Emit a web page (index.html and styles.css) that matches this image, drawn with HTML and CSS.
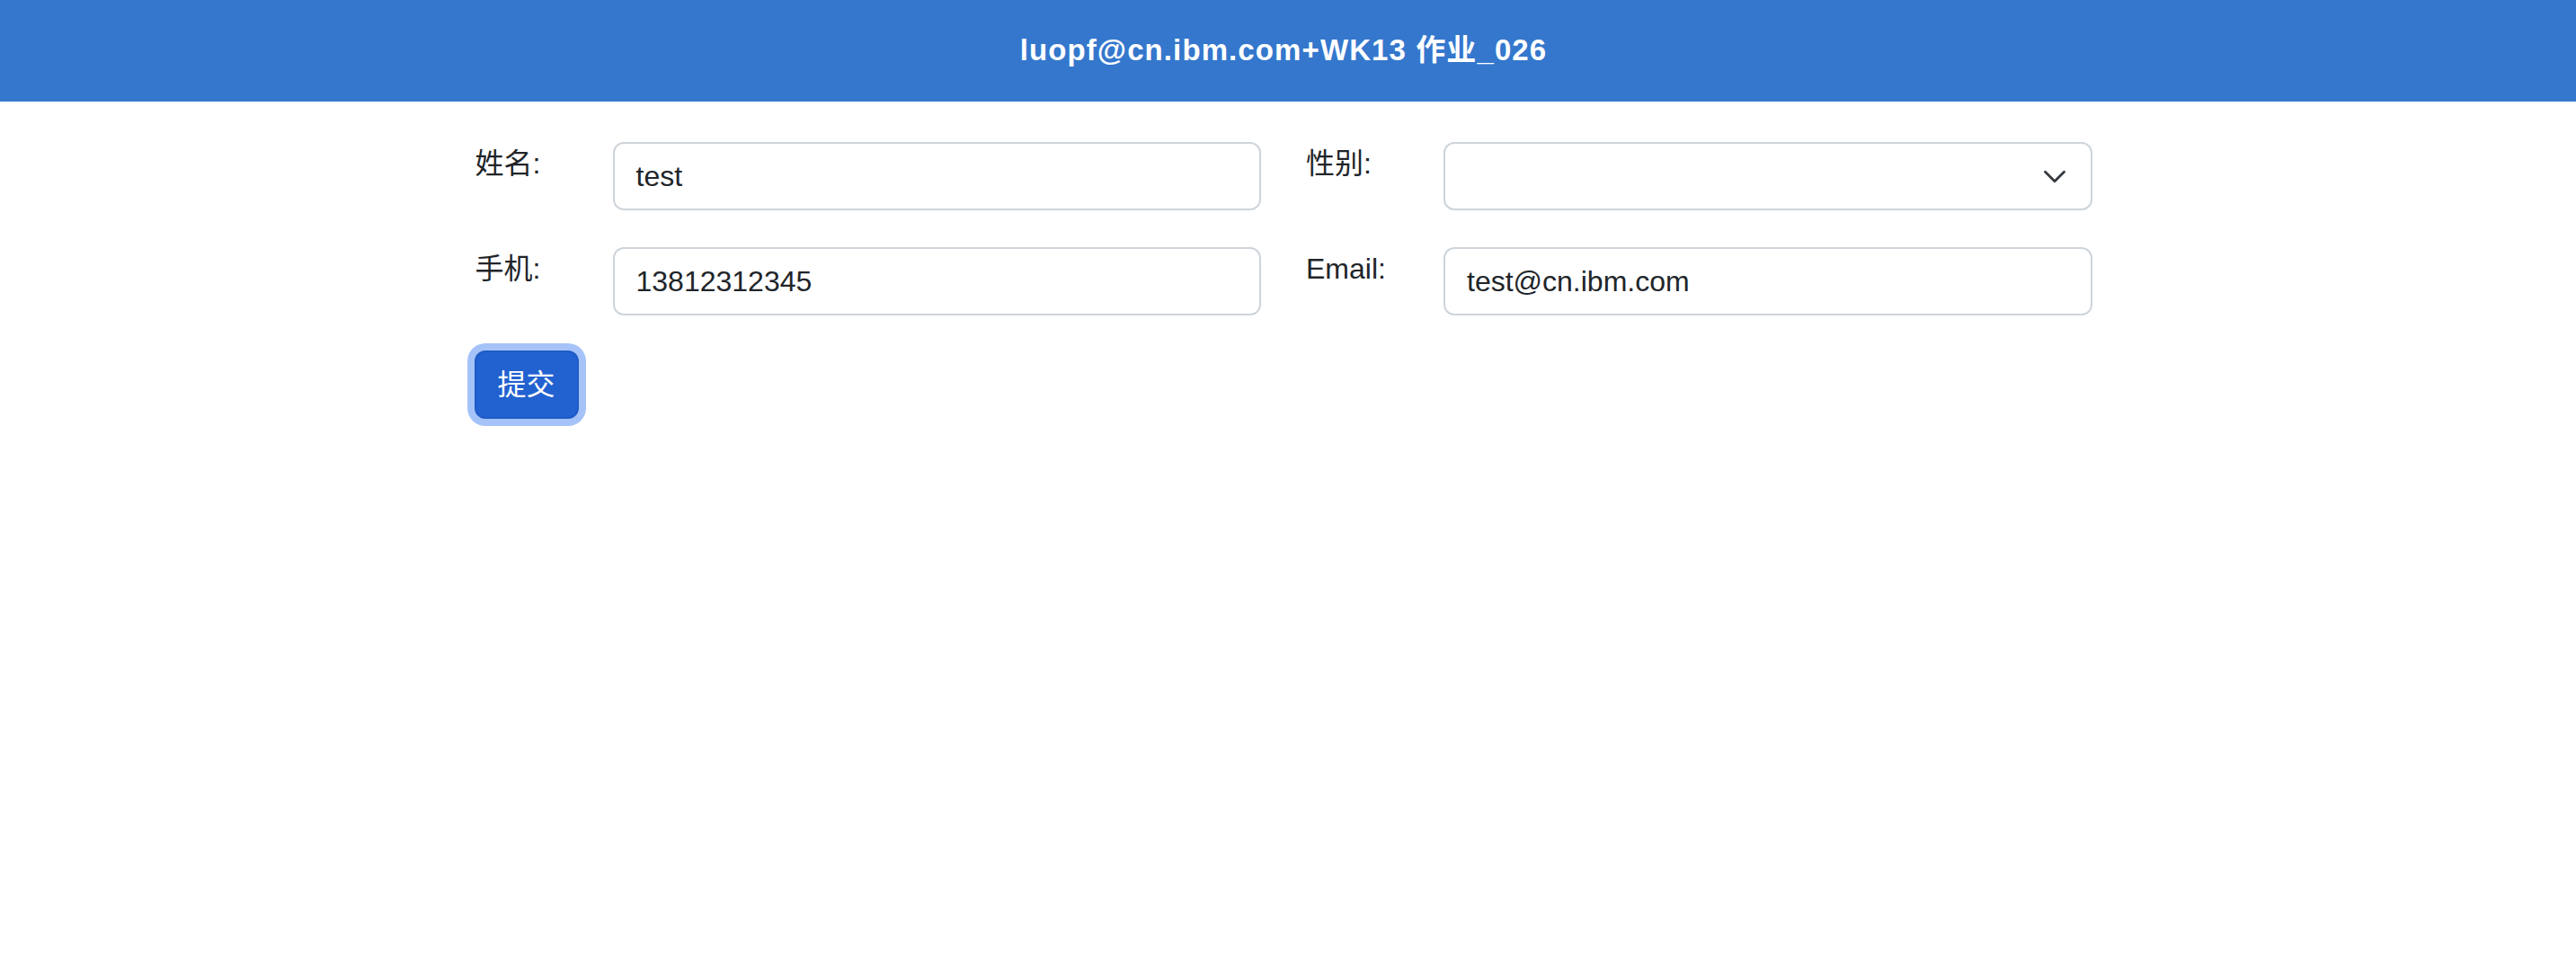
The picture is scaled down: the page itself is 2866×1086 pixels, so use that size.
FILE: index.html
```html
<!DOCTYPE html>
<html lang="zh-CN">
<head>
<meta charset="utf-8">
<title>作业_026</title>
<link rel="stylesheet" href="styles.css">
</head>
<body>
<header class="topbar">
  <h1 class="title">luopf@cn.ibm.com+WK13 作业_026</h1>
</header>
<div class="wrap">
  <main class="panel">
    <form class="form-grid">
      <div class="field">
        <label class="label">姓名:</label>
        <div class="control">test</div>
      </div>
      <div class="field">
        <label class="label">性别:</label>
        <div class="control select">
          <svg class="chev" width="28" height="21" viewBox="0 0 16 12" aria-hidden="true"><path d="M2 3 L8 9 L14 3" fill="none" stroke="#343a40" stroke-width="1.6" stroke-linecap="round" stroke-linejoin="round"/></svg>
        </div>
      </div>
      <div class="field">
        <label class="label">手机:</label>
        <div class="control">13812312345</div>
      </div>
      <div class="field">
        <label class="label">Email:</label>
        <div class="control">test@cn.ibm.com</div>
      </div>
    </form>
    <button class="btn" type="button">提交</button>
  </main>
</div>
</body>
</html>
```

FILE: styles.css
```css
html, body {
  margin: 0;
  padding: 0;
  background: #ffffff;
  font-family: "Liberation Sans", "Noto Sans CJK SC", sans-serif;
  color: #212529;
}

.topbar {
  height: 113px;
  background: #3477cd;
  display: flex;
  align-items: center;
  justify-content: center;
}

.title {
  margin: 0 10px 2px 0;
  font-size: 33px;
  font-weight: 700;
  letter-spacing: 1.1px;
  color: #ffffff;
  line-height: 1.2;
}

.wrap {
  padding-right: 11px;
}

.panel {
  width: 1800px;
  margin: 45px auto 0;
  padding-bottom: 40px;
}

.form-grid {
  display: grid;
  grid-template-columns: 1fr 1fr;
  column-gap: 49px;
  row-gap: 41px;
}

.field {
  display: grid;
  grid-template-columns: 154px 1fr;
  align-items: start;
}

.label {
  font-size: 32px;
  line-height: 48px;
  padding-left: 1px;
}

.control {
  box-sizing: border-box;
  height: 76px;
  border: 2px solid #ced4da;
  border-radius: 12px;
  padding: 12px 24px;
  font-size: 32px;
  line-height: 48px;
  color: #212529;
  background: #ffffff;
}

.select {
  display: flex;
  align-items: center;
  justify-content: flex-end;
  padding-right: 26px;
}

.chev {
  display: block;
}

.btn {
  display: block;
  margin-top: 39px;
  box-sizing: border-box;
  width: 116px;
  height: 76px;
  border: 2px solid #1f5bc6;
  border-radius: 12px;
  background: #2261d0;
  color: #ffffff;
  font-family: "Liberation Sans", "Noto Sans CJK SC", sans-serif;
  font-size: 32px;
  line-height: 48px;
  padding: 12px 0;
  box-shadow: 0 0 0 8px #a5c3f8;
}
```
